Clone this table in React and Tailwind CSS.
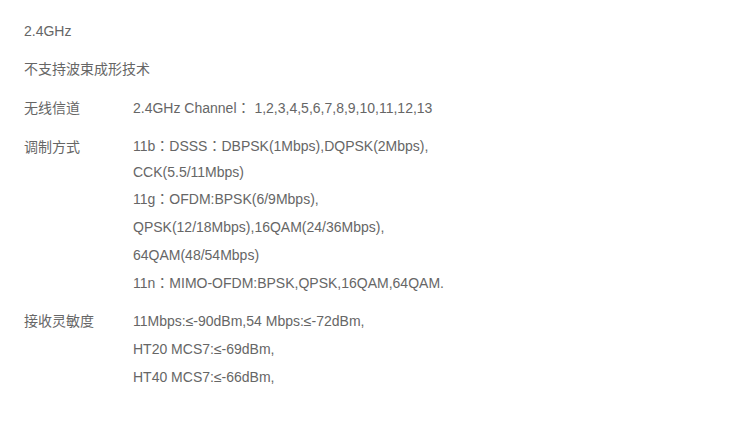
function C() {
  return (
    <span className="leading-none" style={{ fontFamily: '"Noto Sans CJK TC", sans-serif' }}>
      ：
    </span>
  );
}

export default function App() {
  return (
    <div
      className="w-[746px] h-[436px] bg-white pl-6 pt-[17px] flex flex-col gap-[11px] text-[14px] leading-[28px] text-[#666666]"
      style={{ fontFamily: '"Liberation Sans", Arial, "Noto Sans CJK SC", sans-serif' }}
    >
      <div className="h-[28px]">2.4GHz</div>
      <div className="h-[28px] -mt-px">不支持波束成形技术</div>
      <div className="flex h-[28px]">
        <div className="w-[109px] shrink-0">无线信道</div>
        <div>2.4GHz Channel<C /> 1,2,3,4,5,6,7,8,9,10,11,12,13</div>
      </div>
      <div className="flex">
        <div className="w-[109px] shrink-0">调制方式</div>
        <div className="flex flex-col">
          <div className="leading-[26px] h-[26px]">11b<C />DSSS<C />DBPSK(1Mbps),DQPSK(2Mbps),</div>
          <div className="leading-[26px] h-[26px]">CCK(5.5/11Mbps)</div>
          <div className="h-[28px]">11g<C />OFDM:BPSK(6/9Mbps),</div>
          <div className="h-[28px]">QPSK(12/18Mbps),16QAM(24/36Mbps),</div>
          <div className="h-[28px]">64QAM(48/54Mbps)</div>
          <div className="h-[28px]">11n<C />MIMO-OFDM:BPSK,QPSK,16QAM,64QAM.</div>
        </div>
      </div>
      <div className="flex -mt-px">
        <div className="w-[109px] shrink-0">接收灵敏度</div>
        <div className="flex flex-col">
          <div className="h-[28px]">11Mbps:≤-90dBm,54 Mbps:≤-72dBm,</div>
          <div className="h-[28px]">HT20 MCS7:≤-69dBm,</div>
          <div className="h-[28px]">HT40 MCS7:≤-66dBm,</div>
        </div>
      </div>
    </div>
  );
}
